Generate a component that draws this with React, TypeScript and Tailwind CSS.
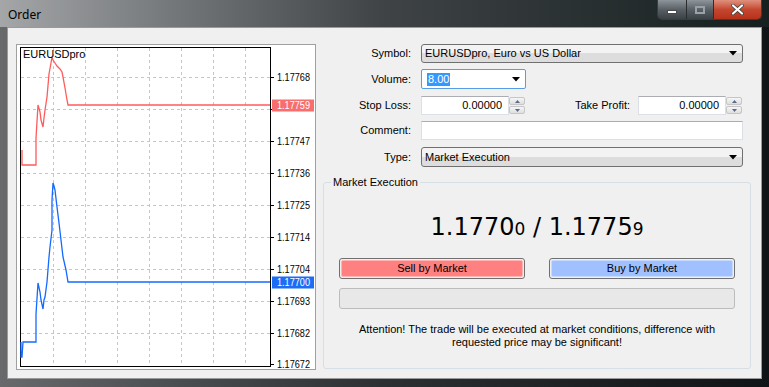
import React from "react";

const ui = { fontFamily: '"Liberation Sans", Arial, sans-serif' };

const gridX = [53, 85, 117, 149, 181, 213, 245];
const gridY = [77, 109, 141, 173, 205, 237, 269, 301, 333];
const axis: [number, string][] = [
  [77, "1.17768"],
  [141, "1.17747"],
  [173, "1.17736"],
  [205, "1.17725"],
  [237, "1.17714"],
  [269, "1.17704"],
  [301, "1.17693"],
  [333, "1.17682"],
  [364, "1.17672"],
];

const askLine =
  "22,150 22,165 36,165 36,138 38,105 40,112 41,120 43,127 44,118 45,110 47,97 49,74 51,63 52,57 53,60 55,63 57,66 60,69 62,72 63,77 65,88 67,100 68,105 270,105";
const bidLine =
  "21,342 21,357 22,357 23,342 36,342 36,314 38,283 40,292 41,300 43,309 44,300 45,297 47,282 49,257 50,247 52,230 52,200 53,183 54,186 55,190 57,207 59,223 61,240 63,257 66,270 68,282 270,282";

function Chart() {
  return (
    <div className="w-[300px] h-[326px] bg-white border border-[#a0a0a0] shrink-0">
      <svg width="298" height="324" viewBox="17 45 298 324" style={ui}>
        {gridX.map((x) => (
          <line key={x} x1={x + 0.5} y1={48} x2={x + 0.5} y2={366} stroke="#c6c6c6" strokeDasharray="3 3" />
        ))}
        {gridY.map((y) => (
          <line key={y} x1={21} y1={y + 0.5} x2={270} y2={y + 0.5} stroke="#c6c6c6" strokeDasharray="3 3" />
        ))}
        <rect x="20.5" y="47.5" width="250" height="319" fill="none" stroke="#000" />
        {axis.map(([y, v]) => (
          <g key={v}>
            <line x1={271} y1={y + 0.5} x2={274} y2={y + 0.5} stroke="#000" />
            <text x={277} y={y + 4} fontSize="10.5" fill="#000" textLength="33" lengthAdjust="spacingAndGlyphs">
              {v}
            </text>
          </g>
        ))}
        {/* 1.17757 tick: its label sits under the ask tag */}
        <line x1={271} y1={109.5} x2={274} y2={109.5} stroke="#000" />
        <polyline points={askLine} fill="none" stroke="#ff5b5b" strokeWidth="1.3" />
        <polyline points={bidLine} fill="none" stroke="#1469ff" strokeWidth="1.3" />
        <rect x="272" y="99.5" width="42" height="12" fill="#f86d6d" />
        <text x={277} y={109} fontSize="10.5" fill="#fff" textLength="33" lengthAdjust="spacingAndGlyphs">
          1.17759
        </text>
        <rect x="272" y="276.5" width="42" height="12" fill="#1d6cf5" />
        <text x={277} y={286} fontSize="10.5" fill="#fff" textLength="33" lengthAdjust="spacingAndGlyphs">
          1.17700
        </text>
        <text x={23} y={58} fontSize="11" fill="#000">
          EURUSDpro
        </text>
      </svg>
    </div>
  );
}

function Arrow() {
  return (
    <svg width="8" height="5" viewBox="0 0 8 5" className="shrink-0">
      <path d="M0 0H8L4 4.5Z" fill="#000" />
    </svg>
  );
}

function Spinner() {
  return (
    <div className="w-[17px] h-full flex flex-col gap-px py-px pr-px">
      <div className="flex-1 flex items-center justify-center rounded-[2px] border border-[#c6c6c6] bg-gradient-to-b from-[#f6f6f6] to-[#dedede]">
        <svg width="5" height="3" viewBox="0 0 5 3">
          <path d="M0 3H5L2.5 0Z" fill="#5a6a8c" />
        </svg>
      </div>
      <div className="flex-1 flex items-center justify-center rounded-[2px] border border-[#c6c6c6] bg-gradient-to-b from-[#f6f6f6] to-[#dedede]">
        <svg width="5" height="3" viewBox="0 0 5 3">
          <path d="M0 0H5L2.5 3Z" fill="#5a6a8c" />
        </svg>
      </div>
    </div>
  );
}

function NumberBox() {
  return (
    <div className="w-[105px] h-full flex items-stretch">
      <div className="w-[88px] flex items-center justify-end pr-[6px] bg-white border border-[#dbdfe6] border-t-[#abadb3]">
        0.00000
      </div>
      <Spinner />
    </div>
  );
}

function Label({ children }: { children: React.ReactNode }) {
  return <div className="w-[89px] shrink-0 text-right pr-px">{children}</div>;
}

function Combo({ text }: { text: string }) {
  return (
    <div className="ml-[9px] w-[322px] h-full flex items-center justify-between pl-[3px] pr-[5px] rounded-[3px] border border-[#707070] bg-gradient-to-b from-[#f3f3f3] from-50% to-[#dddddd] to-50%">
      <span>{text}</span>
      <Arrow />
    </div>
  );
}

export default function App() {
  return (
    <div
      className="w-[769px] h-[387px] overflow-hidden flex flex-col bg-gradient-to-r from-[#67696b] via-[#2c3033] to-[#101416] text-[11px] text-black"
      style={ui}
    >
      {/* title bar */}
      <div className="h-[27px] shrink-0 flex justify-between bg-gradient-to-r from-[#a4a6a8] via-[#3f4346] to-[#16201f]">
        <div className="pl-[8px] pt-[6px] text-[12px] text-black" style={{ fontFamily: '"Noto Sans", "Open Sans", sans-serif' }}>
          Order
        </div>
        <div className="mr-[7px] h-[20px] flex rounded-b-[5px] border border-t-0 border-[#3a3d40] overflow-hidden">
          <div className="w-[29px] flex items-center justify-center border-r border-[#2a2d30] bg-gradient-to-b from-[#8f969b] via-[#5a6166] to-[#3b4246]">
            <div className="w-[10px] h-[4px] bg-white border border-[#4a4a4a] mt-[4px]" />
          </div>
          <div className="w-[27px] flex items-center justify-center border-r border-[#2a2d30] bg-gradient-to-b from-[#8f969b] via-[#5a6166] to-[#3b4246]">
            <div className="w-[10px] h-[8px] border-2 border-[#9ba2a7]" />
          </div>
          <div className="w-[47px] flex items-center justify-center bg-gradient-to-b from-[#e0907e] via-[#c4472f] to-[#b8311a]">
            <svg width="13" height="11" viewBox="0 0 13 11">
              <path d="M2 1.5L11 9.5M11 1.5L2 9.5" stroke="#3a3a3a" strokeWidth="3.6" strokeLinecap="round" />
              <path d="M2 1.5L11 9.5M11 1.5L2 9.5" stroke="#fff" strokeWidth="2.2" strokeLinecap="round" />
            </svg>
          </div>
        </div>
      </div>

      {/* client area */}
      <div className="ml-[7px] w-[755px] h-[352px] border border-[#9a9a9a] bg-[#f0f0f0] flex pl-[8px] pt-[16px]">
        <Chart />

        <div className="ml-[7px] w-[428px] flex flex-col">
          <div className="h-[19px] flex items-center">
            <Label>Symbol:</Label>
            <Combo text="EURUSDpro, Euro vs US Dollar" />
          </div>

          <div className="mt-[6px] h-[20px] flex items-center">
            <Label>Volume:</Label>
            <div className="ml-[9px] w-[105px] h-full flex items-center justify-between pl-[5px] pr-[5px] bg-white border border-[#569de5] rounded-[2px]">
              <span className="bg-[#3399ff] text-white px-px leading-[13px]">8.00</span>
              <Arrow />
            </div>
          </div>

          <div className="mt-[7px] h-[19px] flex items-center">
            <Label>Stop Loss:</Label>
            <div className="ml-[9px] h-full">
              <NumberBox />
            </div>
            <div className="w-[104px] text-right">Take Profit:</div>
            <div className="ml-[8px] h-full">
              <NumberBox />
            </div>
          </div>

          <div className="mt-[6px] h-[19px] flex items-center">
            <Label>Comment:</Label>
            <div className="ml-[9px] w-[322px] h-full bg-white border border-[#dbdfe6] border-t-[#abadb3]" />
          </div>

          <div className="mt-[7px] h-[20px] flex items-center">
            <Label>Type:</Label>
            <Combo text="Market Execution" />
          </div>

          <fieldset className="mt-[9px] h-[193px] border border-[#d5dfe5] rounded-[3px] flex flex-col items-center">
            <legend className="ml-[7px] px-[2px] leading-[13px]">Market Execution</legend>

            <div className="mt-[20px] h-[30px] flex items-baseline" style={{ fontFamily: '"DejaVu Sans", Verdana, sans-serif' }}>
              <span className="text-[24px]">1.1770</span>
              <span className="text-[17px]">0</span>
              <span className="text-[24px]">&nbsp;/&nbsp;1.1775</span>
              <span className="text-[17px]">9</span>
            </div>

            <div className="mt-[19px] w-full px-[15px] flex justify-between">
              <div className="w-[186px] h-[21px] rounded-[3px] border border-[#707070] p-px">
                <div className="w-full h-full rounded-[2px] bg-[#ff8080] border border-[#ffb3b3] flex items-center justify-center">
                  Sell by Market
                </div>
              </div>
              <div className="w-[186px] h-[21px] rounded-[3px] border border-[#707070] p-px">
                <div className="w-full h-full rounded-[2px] bg-[#a0c0ff] border border-[#c6d9ff] flex items-center justify-center">
                  Buy by Market
                </div>
              </div>
            </div>

            <div className="mt-[9px] w-[396px] h-[21px] rounded-[3px] border border-[#bcbcbc] bg-[#e8e8e8]" />

            <div className="mt-[14px] text-center leading-[13px]">
              Attention! The trade will be executed at market conditions, difference with
              <br />
              requested price may be significant!
            </div>
          </fieldset>
        </div>
      </div>
    </div>
  );
}
